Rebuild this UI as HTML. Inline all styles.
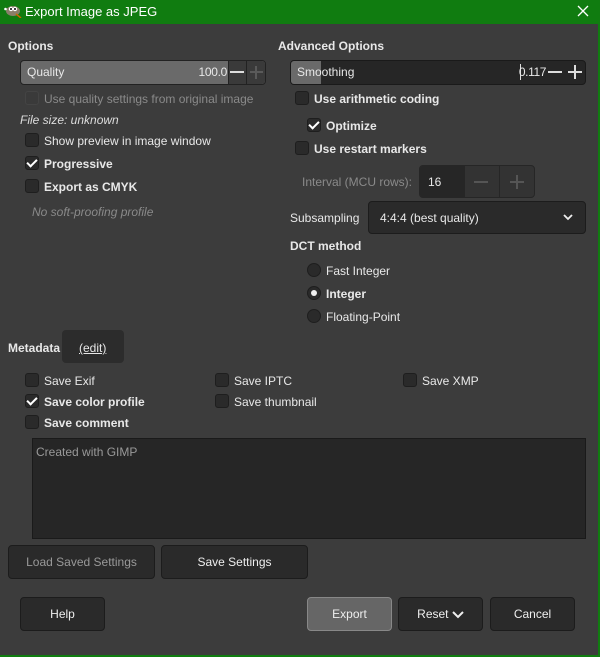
<!DOCTYPE html>
<html><head><meta charset="utf-8"><style>
*{box-sizing:border-box;margin:0;padding:0}
body{width:600px;height:657px;background:#3c3c3c;font-family:"Liberation Sans",sans-serif;font-size:12px;color:#e8e8e8;position:relative;overflow:hidden}
.a{position:absolute;white-space:nowrap}
.title{left:0;top:0;width:600px;height:24px;background:#107c10;color:#fff;font-size:13px}
.b{font-weight:bold}
.cb{position:absolute;width:14px;height:14px;background:#2a2a2a;border:1px solid #1e1e1e;border-radius:3px}
.cb.dis{background:#3a3a3a;border-color:#444}
.chk::after{content:"";position:absolute;left:3px;top:0px;width:4px;height:8px;border:solid #fff;border-width:0 2.5px 2.5px 0;transform:rotate(45deg)}
.rad{position:absolute;width:14px;height:14px;border-radius:50%;background:#2a2a2a;border:1px solid #1e1e1e}
.btn{position:absolute;background:#2a2a2a;border:1px solid #1c1c1c;border-radius:4px;text-align:center;color:#eee}
.dim{color:#8a8a8a}
.r{text-align:right}
</style></head><body>
<div class="a title">
<svg class="a" style="left:4px;top:4px" width="18" height="14"><ellipse cx="9" cy="7" rx="7" ry="5" fill="#8a7f6a"/><circle cx="7" cy="5" r="2.2" fill="#fff"/><circle cx="11" cy="5" r="2.2" fill="#fff"/><circle cx="7" cy="5" r="1" fill="#000"/><circle cx="11" cy="5" r="1" fill="#000"/><circle cx="1.5" cy="5" r="1.3" fill="#fff"/><line x1="12" y1="10" x2="17" y2="14" stroke="#c60" stroke-width="1.5"/></svg>
<span class="a" style="left:25px;top:4px">Export Image as JPEG</span>
<svg class="a" style="left:577px;top:5px" width="12" height="12"><path d="M1 1L11 11M11 1L1 11" stroke="#fff" stroke-width="1.3"/></svg>
</div>
<div class="a" style="left:598px;top:24px;width:2px;height:633px;background:#107c10"></div>
<div class="a" style="left:0;top:655px;width:600px;height:2px;background:#107c10"></div>

<div class="a b" style="left:8px;top:39px">Options</div>
<div class="a" style="left:20px;top:60px;width:246px;height:25px;background:#6a6a6a;border:1px solid #222;border-radius:4px"></div>
<div class="a" style="left:228px;top:61px;width:37px;height:23px;background:#3a3a3a;border-left:1px solid #222;border-radius:0 3px 3px 0"></div>
<div class="a" style="left:246px;top:61px;width:1px;height:23px;background:#222"></div>
<span class="a" style="left:27px;top:65px">Quality</span>
<span class="a r" style="left:170px;width:57px;top:65px;letter-spacing:-0.3px">100.0</span>
<div class="a" style="left:230px;top:71px;width:14px;height:2px;background:#ddd"></div>
<div class="a" style="left:250px;top:71px;width:13px;height:2px;background:#5a5a5a"></div>
<div class="a" style="left:255px;top:66px;width:2px;height:13px;background:#5a5a5a"></div>

<div class="cb dis" style="left:25px;top:91px"></div><span class="a dim" style="left:44px;top:92px">Use quality settings from original image</span>
<span class="a" style="left:20px;top:113px;font-style:italic;color:#ddd">File size: unknown</span>
<div class="cb" style="left:25px;top:133px"></div><span class="a" style="left:44px;top:134px">Show preview in image window</span>
<div class="cb chk" style="left:25px;top:156px"></div><span class="a b" style="left:44px;top:157px">Progressive</span>
<div class="cb" style="left:25px;top:179px"></div><span class="a b" style="left:44px;top:180px">Export as CMYK</span>
<span class="a dim" style="left:32px;top:205px;font-style:italic">No soft-proofing profile</span>

<div class="a b" style="left:278px;top:39px">Advanced Options</div>
<div class="a" style="left:290px;top:60px;width:296px;height:25px;background:#262626;border:1px solid #1a1a1a;border-radius:4px;overflow:hidden"><div style="width:30px;height:100%;background:#6a6a6a"></div></div>
<span class="a" style="left:297px;top:65px">Smoothing</span>
<div class="a" style="left:520px;top:64px;width:1px;height:16px;background:#ddd"></div>
<span class="a r" style="left:510px;width:36px;top:65px;letter-spacing:-0.4px">0.117</span>
<div class="a" style="left:548px;top:71px;width:14px;height:2px;background:#ddd"></div>
<div class="a" style="left:568px;top:71px;width:14px;height:2px;background:#ddd"></div>
<div class="a" style="left:574px;top:65px;width:2px;height:14px;background:#ddd"></div>

<div class="cb" style="left:295px;top:91px"></div><span class="a b" style="left:314px;top:92px">Use arithmetic coding</span>
<div class="cb chk" style="left:307px;top:118px"></div><span class="a b" style="left:326px;top:119px">Optimize</span>
<div class="cb" style="left:295px;top:141px"></div><span class="a b" style="left:314px;top:142px">Use restart markers</span>
<span class="a dim" style="left:302px;top:175px">Interval (MCU rows):</span>
<div class="a" style="left:419px;top:165px;width:116px;height:33px;background:#333;border:1px solid #262626;border-radius:4px"></div>
<div class="a" style="left:420px;top:166px;width:45px;height:31px;background:#262626;border-radius:3px 0 0 3px"></div>
<div class="a" style="left:499px;top:166px;width:1px;height:31px;background:#262626"></div>
<span class="a" style="left:428px;top:175px">16</span>
<div class="a" style="left:474px;top:181px;width:14px;height:2px;background:#555"></div>
<div class="a" style="left:510px;top:181px;width:14px;height:2px;background:#555"></div>
<div class="a" style="left:516px;top:175px;width:2px;height:14px;background:#555"></div>

<span class="a" style="left:290px;top:211px">Subsampling</span>
<div class="a" style="left:368px;top:201px;width:218px;height:33px;background:#2a2a2a;border:1px solid #1c1c1c;border-radius:4px"></div>
<span class="a" style="left:380px;top:211px">4:4:4 (best quality)</span>
<svg class="a" style="left:563px;top:214px" width="10" height="7"><path d="M1 1L5 5L9 1" stroke="#eee" stroke-width="1.8" fill="none"/></svg>
<div class="a b" style="left:290px;top:239px">DCT method</div>
<div class="rad" style="left:307px;top:263px"></div><span class="a" style="left:326px;top:264px">Fast Integer</span>
<div class="rad" style="left:307px;top:286px"><div style="position:absolute;left:3px;top:3px;width:6px;height:6px;border-radius:50%;background:#eee"></div></div><span class="a b" style="left:326px;top:287px">Integer</span>
<div class="rad" style="left:307px;top:309px"></div><span class="a" style="left:326px;top:310px">Floating-Point</span>

<span class="a b" style="left:8px;top:341px">Metadata</span>
<div class="a" style="left:62px;top:330px;width:62px;height:33px;background:#2c2c2c;border-radius:4px"></div>
<span class="a" style="left:79px;top:341px;text-decoration:underline">(edit)</span>
<div class="cb" style="left:25px;top:373px"></div><span class="a" style="left:44px;top:374px">Save Exif</span>
<div class="cb" style="left:215px;top:373px"></div><span class="a" style="left:234px;top:374px">Save IPTC</span>
<div class="cb" style="left:403px;top:373px"></div><span class="a" style="left:422px;top:374px">Save XMP</span>
<div class="cb chk" style="left:25px;top:394px"></div><span class="a b" style="left:44px;top:395px">Save color profile</span>
<div class="cb" style="left:215px;top:394px"></div><span class="a" style="left:234px;top:395px">Save thumbnail</span>
<div class="cb" style="left:25px;top:415px"></div><span class="a b" style="left:44px;top:416px">Save comment</span>
<div class="a" style="left:32px;top:438px;width:554px;height:101px;background:#262626;border:1px solid #1a1a1a"></div>
<span class="a dim" style="left:36px;top:445px;color:#999">Created with GIMP</span>

<div class="btn dim" style="left:8px;top:545px;width:147px;height:34px;line-height:32px;color:#999">Load Saved Settings</div>
<div class="btn" style="left:161px;top:545px;width:147px;height:34px;line-height:32px">Save Settings</div>
<div class="btn" style="left:20px;top:597px;width:85px;height:34px;line-height:32px">Help</div>
<div class="btn" style="left:307px;top:597px;width:85px;height:34px;line-height:32px;background:#666;border-color:#888">Export</div>
<div class="btn" style="left:398px;top:597px;width:85px;height:34px;line-height:32px">Reset <svg width="12" height="8" style="vertical-align:middle"><path d="M1 1L6 6L11 1" stroke="#eee" stroke-width="2" fill="none"/></svg></div>
<div class="btn" style="left:490px;top:597px;width:85px;height:34px;line-height:32px">Cancel</div>
</body></html>
